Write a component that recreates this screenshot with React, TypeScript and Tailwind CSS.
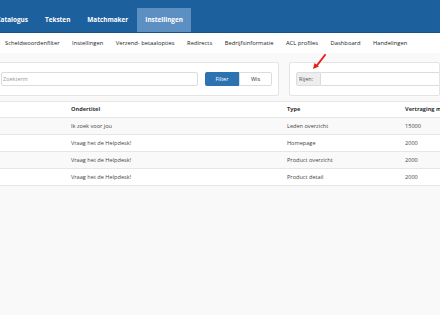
import React from "react";

const topItems = ["Catalogus", "Teksten", "Matchmaker", "Instellingen"];
const subItems = [
  "Scheldwoordenfilter",
  "Instellingen",
  "Verzend- betaalopties",
  "Redirects",
  "Bedrijfsinformatie",
  "ACL profiles",
  "Dashboard",
  "Handelingen",
];

const rows = [
  { title: "Ik zoek voor jou", type: "Leden overzicht", delay: "15000" },
  { title: "Vraag het de Helpdesk!", type: "Homepage", delay: "2000" },
  { title: "Vraag het de Helpdesk!", type: "Product overzicht", delay: "2000" },
  { title: "Vraag het de Helpdesk!", type: "Product detail", delay: "2000" },
];

const font = { fontFamily: '"Open Sans", "Liberation Sans", sans-serif' };

export default function App() {
  return (
    <div className="relative h-[330px] w-[440px] overflow-hidden bg-white" style={font}>
      {/* main nav */}
      <div className="flex h-[33px] items-end border-b border-[#14528a] bg-[#1d609e]">
        <div className="-ml-[12px] flex items-end">
          {topItems.map((item) => (
            <div
              key={item}
              className={`flex h-[24px] items-center px-[8.5px] text-[6.4px] font-bold text-white ${
                item === "Instellingen" ? "bg-[#5c8fc2]" : ""
              }`}
            >
              {item}
            </div>
          ))}
        </div>
      </div>

      {/* sub nav */}
      <div className="flex h-[20px] items-center gap-[12.5px] bg-white pl-[5px] text-[5.8px] text-[#222]">
        {subItems.map((item) => (
          <span key={item} className="whitespace-nowrap">
            {item}
          </span>
        ))}
      </div>

      {/* content */}
      <div className="h-[262px] bg-[#f9f9f9] pt-[9px]">
        <div className="flex gap-[10px]">
          <div className="-ml-[10px] flex h-[34px] w-[289px] items-center rounded-[2px] border border-[#e4e4e4] bg-white pr-[6px]">
            <div className="ml-[10px] flex h-[14px] flex-1 items-center rounded-[2px] border border-[#dcdcdc] pl-[1px] text-[5.5px] text-[#999]">
              Zoekterm
            </div>
            <div className="ml-[7px] flex h-[14px] w-[34px] items-center justify-center rounded-l-[2px] bg-[#2d73b2] text-[5.5px] text-white">
              Filter
            </div>
            <div className="flex h-[14px] w-[33px] items-center justify-center rounded-r-[2px] border border-[#dcdcdc] bg-white text-[5.5px] text-[#333]">
              Wis
            </div>
          </div>
          <div className="flex h-[34px] flex-1 items-center rounded-[2px] border border-[#e4e4e4] bg-white pl-[6px]">
            <div className="flex h-[14px] w-[25px] items-center rounded-l-[2px] border border-[#dcdcdc] bg-[#eeeeee] pl-[2px] text-[5.5px] text-[#555]">
              Rijen:
            </div>
            <div className="h-[14px] flex-1 border-y border-[#dcdcdc] bg-white" />
          </div>
        </div>

        <div className="mt-[5px] bg-white text-[5.6px] text-[#444]">
          <div className="grid h-[17px] grid-cols-[71px_216px_118px_1fr] items-center border-y border-[#e6e6e6] font-bold text-[#333]">
            <span />
            <span>Ondertitel</span>
            <span>Type</span>
            <span className="whitespace-nowrap">Vertraging ms</span>
          </div>
          {rows.map((r, i) => (
            <div
              key={i}
              className={`grid h-[17px] grid-cols-[71px_216px_118px_1fr] items-center border-b border-[#e6e6e6] ${
                i % 2 === 0 ? "bg-[#f9f9f9]" : "bg-white"
              }`}
            >
              <span />
              <span>{r.title}</span>
              <span>{r.type}</span>
              <span>{r.delay}</span>
            </div>
          ))}
        </div>
      </div>

      {/* red annotation arrow */}
      <svg className="absolute left-[311px] top-[54px]" width="17" height="17" viewBox="0 0 17 17">
        <path d="M14 1 L5.5 12" stroke="#e8201c" strokeWidth="2" strokeLinecap="round" fill="none" />
        <path d="M2 15 L3.5 9 L8 12.5 Z" fill="#e8201c" />
      </svg>
    </div>
  );
}
